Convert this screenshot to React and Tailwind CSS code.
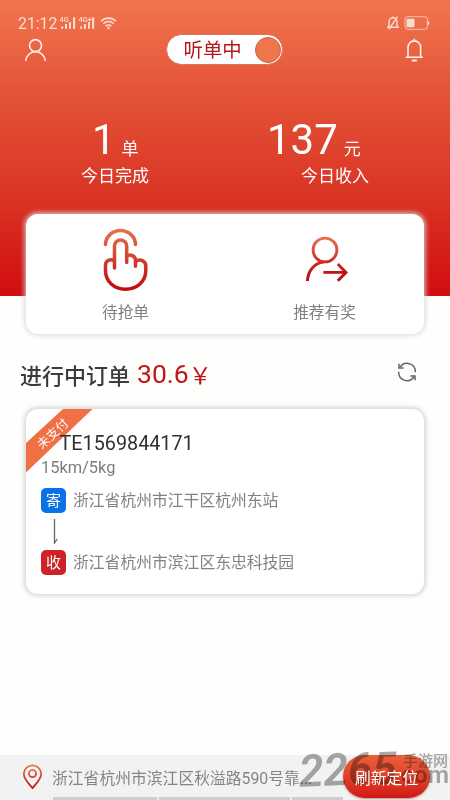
const CJK = "font-['Roboto','Noto_Sans_CJK_SC',sans-serif]"

function Signal({ label }) {
  return (
    <svg className="overflow-visible" width="16" height="14" viewBox="0 0 16 14" fill="currentColor">
      <text x="-.5" y="5.8" fontSize="7.4" fontWeight="500">{label}</text>
      <rect x="1.2" y="10.4" width="2" height="2.4" />
      <rect x="5" y="8" width="2" height="4.8" />
      <rect x="9" y="6" width="2" height="6.8" />
      <rect x="13" y="1.4" width="2.2" height="11.4" />
    </svg>
  )
}

function StatusBar() {
  return (
    <div className="flex h-[14px] items-center text-[#fbdccf]">
      <span className="mt-[2px] ml-[18px] w-[42px] text-[15.8px] leading-[14px]">21:12</span>
      <Signal label="4G" />
      <span className="ml-[3px] flex">
        <Signal label="4G+" />
      </span>
      <svg className="ml-[5px]" width="17" height="14" viewBox="0 0 17 14" fill="none" stroke="currentColor" strokeWidth="1.6">
        <path d="M1 5.2a10.6 10.6 0 0 1 15 0" />
        <path d="M3.3 7.7a7.4 7.4 0 0 1 10.4 0" />
        <path d="M5.6 10.2a4.1 4.1 0 0 1 5.8 0" />
        <circle cx="8.5" cy="12" r="1.2" fill="currentColor" stroke="none" />
      </svg>
      <svg className="ml-auto" width="14" height="14" viewBox="0 0 14 14" fill="none" stroke="currentColor" strokeWidth="1.5">
        <path d="M3 11V5.8a4 4 0 0 1 8 0V11M1 11.2h12M11.4.6L3 13.4M7 .5v1.6" />
      </svg>
      <svg className="mr-[20px] ml-[4px]" width="26" height="14" viewBox="0 0 26 14" fill="none" stroke="currentColor">
        <rect x="1" y=".7" width="22.4" height="12.6" rx="2.8" strokeOpacity=".75" />
        <rect x="2.5" y="2.8" width="8" height="8.4" rx="1" fill="currentColor" stroke="none" />
        <path d="M24.6 5.5v3" strokeWidth="1.4" />
      </svg>
    </div>
  )
}

function TopBar() {
  return (
    <div className="mt-[3px] flex h-[33px] items-center justify-between pr-[26px] pl-[24px]">
      <svg width="24" height="24" viewBox="0 0 24 24" fill="none" stroke="#fff1e8" strokeWidth="1.6">
        <circle cx="11.5" cy="7.6" r="6" />
        <path d="M1.7 23c.6-5.5 4.8-9.4 9.8-9.4s9.2 3.900 9.800 9.400" />
      </svg>
      <div className="mr-[4px] flex h-[31px] w-[117px] items-center justify-between rounded-full border border-[#d9735a] bg-white pr-[1px] pl-[17px]">
        <span className="relative top-[1px] text-[19.4px] leading-[30px] whitespace-nowrap text-[#b3191b]">听单中</span>
        <span className="size-[26px] rounded-full border border-[#c96241] bg-[#ee754c]" />
      </div>
      <svg width="20" height="24" viewBox="0 0 20 24" fill="none" stroke="#fff1e8" strokeWidth="1.6">
        <path d="M4 18.8V9.2a6.3 6.3 0 0 1 12.6 0v9.6M1.8 19.2h17M10.3.8v2.2" />
        <path d="M7.8 22.5h5" strokeWidth="2" />
      </svg>
    </div>
  )
}

function Stat({ value, unit, label, className }) {
  return (
    <div className={`flex flex-col text-white ${className}`}>
      <div className="flex items-baseline whitespace-nowrap">
        <span className="text-[42px] leading-[46px]">{value}</span>
        <span className="relative top-[1px] ml-[6px] text-[17px] leading-[20px]">{unit}</span>
      </div>
      {label}
    </div>
  )
}

function Stats() {
  return (
    <div className="mt-[51px] flex">
      <Stat
        value="1"
        unit="单"
        className="w-[174px] pl-[92px]"
        label={<span className="mt-px -ml-[11px] text-[17px] leading-[24px] whitespace-nowrap">今日完成</span>}
      />
      <Stat
        value="137"
        unit="元"
        className="pl-[93px]"
        label={<span className="mt-px ml-[34px] text-[17px] leading-[24px] whitespace-nowrap">今日收入</span>}
      />
    </div>
  )
}

function IconGradient({ id, y1, y2 }) {
  return (
    <linearGradient id={id} gradientUnits="userSpaceOnUse" x1="0" y1={y1} x2="0" y2={y2}>
      <stop stopColor="#e5734f" />
      <stop offset="1" stopColor="#c20a10" />
    </linearGradient>
  )
}

function TapIcon() {
  return (
    <svg width="48" height="66" viewBox="0 0 48 66" fill="none" stroke="url(#tap)" strokeWidth="3.5" strokeLinecap="round" strokeLinejoin="round">
      <defs><IconGradient id="tap" y1="2" y2="62" /></defs>
      <path d="M3.500 17.500a15 14 0 0 1 30 0" />
      <path d="M12.500 41V19a6.100 6.100 0 0 1 12.200 0v16.500" />
      <path d="M24.700 29.300c3.600-2.800 8.800-.4 8.800 4.200v5.700" />
      <path d="M33.500 34.500c4.500-3.400 10.300-.6 10.300 4.500v4.500c0 11-9 18.700-20.300 18.700S3.500 54.500 3.500 43.500V38.500c0-5 4.500-7 9-4.800" />
    </svg>
  )
}

function ReferIcon() {
  return (
    <svg width="44" height="48" viewBox="0 0 44 48" fill="none" stroke="url(#refer)" strokeWidth="2.9">
      <defs><IconGradient id="refer" y1="2" y2="40" /></defs>
      <circle cx="20" cy="15" r="11.9" />
      <path d="M2.400 46C3 35.500 9.500 28 18.500 27" />
      <path d="M18.300 37.400h22M32.800 29l8.200 8.400-8.200 8.400" />
    </svg>
  )
}

function ActionCard() {
  return (
    <section className="relative mx-[26px] -mt-[82px] flex h-[120px] rounded-[12px] bg-white shadow-[0_0_4px_2px_rgba(215,215,215,0.75)]">
      <div className="flex w-[199px] flex-col items-center">
        <div className="mt-[13px] flex h-[64px]"><TapIcon /></div>
        <span className="mt-[10px] text-[15.7px] leading-[24px] text-[#808080]">待抢单</span>
      </div>
      <div className="flex w-[199px] flex-col items-center">
        <div className="mt-[21px] flex h-[56px] pl-[5px]"><ReferIcon /></div>
        <span className="mt-[10px] text-[15.7px] leading-[24px] text-[#808080]">推荐有奖</span>
      </div>
    </section>
  )
}

function SectionTitle() {
  return (
    <div className="mt-[24px] flex h-[32px] items-center pr-[33px] pl-[20px]">
      <h2 className="relative top-[3px] text-[22px] leading-[32px] font-medium text-[#3b3b3b]">进行中订单</h2>
      <span className="ml-[7px] text-[26.5px] leading-[32px] text-[#bd1717]">30.6</span>
      <span className="font-['Noto_Sans_CJK_SC',sans-serif] text-[23px] leading-[32px] text-[#bd1717]">￥</span>
      <svg className="ml-auto -mt-[4px]" width="20" height="20" viewBox="0 0 20 20" fill="none" stroke="#626262" strokeWidth="1.5">
        <path d="M3.2 5A8.3 8.3 0 0 1 18.300 10.300M16.800 15A8.300 8.300 0 0 1 1.700 9.700" />
        <path d="M2 1.800v4.200h4.600M18 18.200v-4.200h-4.600" />
      </svg>
    </div>
  )
}

function AddressRow({ tag, tagClass, address }) {
  return (
    <div className="flex h-[25px] items-center">
      <span className={`flex size-[25px] items-center justify-center rounded-[5px] text-[15px] leading-[24px] text-white ${tagClass}`}>
        {tag}
      </span>
      <span className="ml-[7px] text-[15.8px] leading-[24px] whitespace-nowrap text-[#828282]">{address}</span>
    </div>
  )
}

function OrderCard() {
  return (
    <section className="relative mx-[26px] mt-[19px] h-[185px] rounded-[12px] bg-white pl-[15px] shadow-[0_0_4px_2px_rgba(205,205,205,0.8)]">
      <div className="absolute top-0 left-0 size-[67px] overflow-hidden rounded-tl-[12px]">
        <svg className="absolute inset-0" width="67" height="67" viewBox="0 0 67 67">
          <path d="M37 0h29.500L0 63.500V34z" fill="#f07046" />
        </svg>
        <span className="absolute top-[16px] left-[2px] w-[50px] -rotate-[43deg] text-center text-[12.5px] leading-[18px] whitespace-nowrap text-white">
          未支付
        </span>
      </div>
      <div className="relative pt-[22px] pl-[18.5px] text-[19.8px] leading-[26px] text-[#303030]">TE1569844171</div>
      <div className="mt-[1px] mb-[10px] text-[16.4px] leading-[20px] text-[#7c7c7c]">15km/5kg</div>
      <AddressRow tag="寄" tagClass="bg-[#0872e6]" address="浙江省杭州市江干区杭州东站" />
      <svg className="my-[6px] ml-[9px] block" width="12" height="25" viewBox="0 0 12 25" fill="none" stroke="#666" strokeWidth="1.3">
        <path d="M4.500 0v24l2.800-4" />
      </svg>
      <AddressRow tag="收" tagClass="bg-[#cc2228]" address="浙江省杭州市滨江区东忠科技园" />
    </section>
  )
}

function LocationBar() {
  return (
    <footer className="relative mt-auto flex h-[45px] bg-[#f2f2f2]">
      <svg className="mt-[9px] ml-[22px] shrink-0" width="21" height="26" viewBox="0 0 21 26" fill="none" stroke="url(#pin)" strokeWidth="1.7">
        <defs><IconGradient id="pin" y1="1" y2="25" /></defs>
        <path d="M10.500 24C7.500 20.500 1.800 15 1.800 10a8.700 8.700 0 0 1 17.400 0c0 5-5.700 10.500-8.700 14z" />
        <circle cx="10.500" cy="9.600" r="3.600" />
      </svg>
      <div className="ml-[9px] flex w-[291px] flex-col justify-between">
        <span className="mt-[12px] text-[15.8px] leading-[24px] whitespace-nowrap text-[#858585]">浙江省杭州市滨江区秋溢路590号靠...</span>
        <div className="ml-[1px] flex gap-[2px]">
          <i className="h-[3px] w-[104px] bg-[#cecece]" />
          <i className="h-[3px] w-[132px] bg-[#cecece]" />
          <i className="h-[3px] w-[51px] bg-[#cecece]" />
        </div>
      </div>
      <button className="h-[43px] w-[87px] shrink-0 rounded-full bg-gradient-to-b from-[#ea603d] to-[#d11212] shadow-[0_1px_2px_rgba(120,60,60,0.5)]" />
      <Watermark />
      <span className="pointer-events-none absolute top-[12px] left-[355px] text-[15.8px] leading-[24px] whitespace-nowrap text-white">
        刷新定位
      </span>
    </footer>
  )
}

function Watermark() {
  return (
    <svg className="pointer-events-none absolute -top-[14px] left-[296px] mix-blend-multiply" width="154" height="59" viewBox="0 0 154 59" fill="#ababab">
      <text x="3" y="44" fontSize="45" fontWeight="600" fontStyle="italic" textLength="98" lengthAdjust="spacingAndGlyphs" transform="rotate(-2 52 28)">2265</text>
      <text x="107" y="25" fontSize="14.5" fontWeight="500" textLength="45" lengthAdjust="spacingAndGlyphs">手游网</text>
      <text x="98" y="42" fontSize="23" fontWeight="600" textLength="55" lengthAdjust="spacingAndGlyphs">.com</text>
    </svg>
  )
}

export default function App() {
  return (
    <div className={`flex h-[800px] w-[450px] flex-col overflow-hidden bg-[#fefefd] ${CJK}`}>
      <header className="h-[296px] shrink-0 bg-[linear-gradient(#f2754e,#e35236_33%,#d93323_68%,#d00d10)] pt-[16px]">
        <StatusBar />
        <TopBar />
        <Stats />
      </header>
      <ActionCard />
      <SectionTitle />
      <OrderCard />
      <LocationBar />
    </div>
  )
}
